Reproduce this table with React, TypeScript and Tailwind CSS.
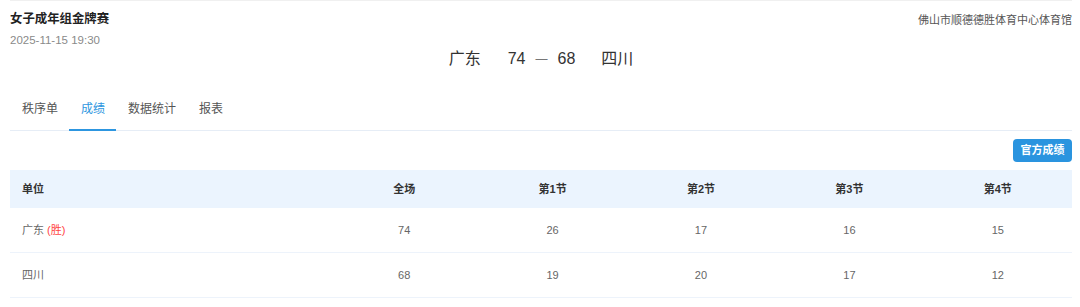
import React from "react";

const font = { fontFamily: '"Liberation Sans", "Noto Sans CJK SC", sans-serif' };

const rows = [
  { name: "广东", win: true, total: 74, q: [26, 17, 16, 15] },
  { name: "四川", win: false, total: 68, q: [19, 20, 17, 12] },
];

export default function App() {
  const tabs = ["秩序单", "成绩", "数据统计", "报表"];
  return (
    <div className="w-[1080px] h-[307px] bg-white overflow-hidden" style={font}>
      <div className="mx-[10px] w-[1062px] border-t border-[#f0f0f0]">
        <div className="flex justify-between">
          <div className="pt-[9px]">
            <div className="text-[12.4px] leading-[18px] font-bold text-[#222]">女子成年组金牌赛</div>
            <div className="mt-[3px] text-[11.5px] leading-[18px] text-[#8a8a8a]">2025-11-15 19:30</div>
          </div>
          <div className="pt-[10px] text-[11px] leading-[18px] text-[#555]">佛山市顺德德胜体育中心体育馆</div>
        </div>
        <div className="flex justify-center items-center h-[20px] text-[16px] text-[#333]">
          <span>广东</span>
          <span className="ml-[27px]">74</span>
          <span className="ml-[10px] text-[12px] text-[#777]">—</span>
          <span className="ml-[10px]">68</span>
          <span className="ml-[26px]">四川</span>
        </div>
        <div className="mt-[19px] flex border-b border-[#e6edf6] h-[43px]">
          {tabs.map((t, i) => (
            <div
              key={t}
              className={
                "relative h-[42px] pl-[12px] pr-[11px] flex items-center text-[12px] " +
                (i === 1 ? "text-[#2d96e0]" : "text-[#555]")
              }
            >
              {t}
              {i === 1 && <span className="absolute left-0 right-0 bottom-[-1px] h-[2px] bg-[#2d96e0]" />}
            </div>
          ))}
        </div>
        <div className="flex justify-end mt-[8px]">
          <button className="h-[23px] w-[59px] rounded-[4px] bg-[#2a94df] text-white text-[11px] font-bold flex items-center justify-center">
            官方成绩
          </button>
        </div>
        <div className="mt-[8px]">
          <div className="grid grid-cols-[320px_repeat(5,1fr)] h-[38px] bg-[#ebf4fe] items-center text-[11px] font-bold text-[#333]">
            <div className="pl-[12px]">单位</div>
            <div className="text-center">全场</div>
            <div className="text-center">第1节</div>
            <div className="text-center">第2节</div>
            <div className="text-center">第3节</div>
            <div className="text-center">第4节</div>
          </div>
          {rows.map((r) => (
            <div
              key={r.name}
              className="grid grid-cols-[320px_repeat(5,1fr)] h-[45px] border-b border-[#edf3fb] items-center text-[11px] text-[#666]"
            >
              <div className="pl-[12px]">
                {r.name}
                {r.win && <span className="ml-[3px] text-[#f44]">(胜)</span>}
              </div>
              <div className="text-center">{r.total}</div>
              {r.q.map((v, i) => (
                <div key={i} className="text-center">
                  {v}
                </div>
              ))}
            </div>
          ))}
        </div>
      </div>
    </div>
  );
}
